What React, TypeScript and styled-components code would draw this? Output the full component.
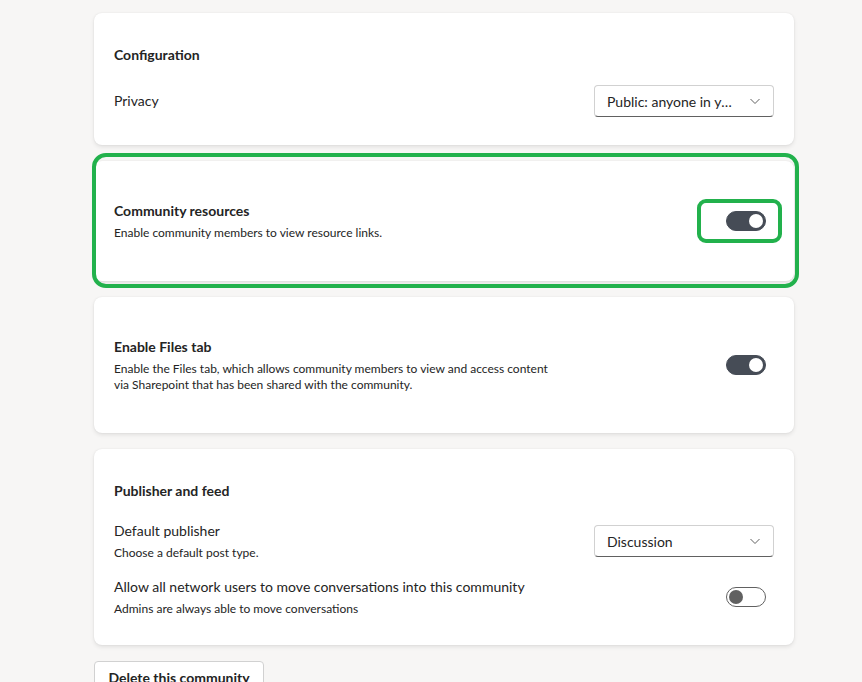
import React from 'react';
import styled, { createGlobalStyle } from 'styled-components';

const GlobalStyle = createGlobalStyle`
    html, body {
        margin: 0;
        padding: 0;
        background: #f7f6f5;
        overflow: hidden;
    }
    body {
        font-family: Lato, "Segoe UI", "Noto Sans", sans-serif;
        color: #242424;
    }
`

const Page = styled.div`
    width: 700px;
    padding: 13px 0 0 94px;
    display: flex;
    flex-direction: column;
    gap: 16px;
`
const Card = styled.section<{ $toggle?: boolean }>`
    position: relative;
    background: #ffffff;
    border-radius: 8px;
    box-shadow: 0 2px 4px rgba(0, 0, 0, 0.09), 0 0 2px rgba(0, 0, 0, 0.07);
    padding: ${p => p.$toggle ? '40px 28px 40px 20px' : '32px 20px 28px 20px'};
    display: flex;
    flex-direction: column;
    gap: 20px;
`
const ToggleRow = styled.div`
    display: flex;
    align-items: center;
    justify-content: space-between;
`
const Text = styled.div<{ $width?: number }>`
    display: flex;
    flex-direction: column;
    gap: 4px;
    max-width: ${p => p.$width ? p.$width + 'px' : 'none'};
`
const Title = styled.h3`
    margin: 0;
    font-size: 14px;
    line-height: 20px;
    font-weight: 700;
`
const Label = styled.div`
    font-size: 14px;
    line-height: 20px;
`
const Hint = styled.p`
    margin: 0;
    font-size: 12px;
    line-height: 16px;
`
const Rows = styled.div`
    display: flex;
    flex-direction: column;
    gap: 16px;
`
const Row = styled.div`
    display: flex;
    align-items: center;
    justify-content: space-between;
    min-height: 32px;
`
const Select = styled.button`
    box-sizing: border-box;
    width: 180px;
    height: 32px;
    padding: 0 12px 0 12px;
    background: #ffffff;
    border: 1px solid #d1d1d1;
    border-bottom-color: #616161;
    border-radius: 4px;
    display: flex;
    align-items: center;
    justify-content: space-between;
    font-family: inherit;
    font-size: 14px;
    color: #242424;
    cursor: pointer;
`
const SelectValue = styled.span`
    max-width: 128px;
    white-space: nowrap;
    overflow: hidden;
    text-overflow: ellipsis;
`
const Switch = styled.span<{ $on?: boolean; $gap?: number }>`
    position: relative;
    flex-shrink: 0;
    box-sizing: border-box;
    width: 40px;
    height: 20px;
    margin-right: ${p => p.$gap || 0}px;
    border-radius: 10px;
    background: ${p => p.$on ? '#464c56' : '#ffffff'};
    border: 1px solid ${p => p.$on ? '#464c56' : '#616161'};

    &::after {
        content: "";
        position: absolute;
        top: 2px;
        left: ${p => p.$on ? '22px' : '2px'};
        width: 14px;
        height: 14px;
        border-radius: 50%;
        background: ${p => p.$on ? '#ffffff' : '#616161'};
    }
`
const SwitchWrap = styled.span`
    position: relative;
    display: inline-flex;
`
// green marker drawn over the screenshot
const Highlight = styled.span<{ $inset: string; $radius: number }>`
    position: absolute;
    inset: ${p => p.$inset};
    border: 4px solid #22b14c;
    border-radius: ${p => p.$radius}px;
    pointer-events: none;
`
const DeleteButton = styled.button`
    align-self: flex-start;
    box-sizing: border-box;
    width: 170px;
    height: 32px;
    background: #ffffff;
    border: 1px solid #d1d1d1;
    border-radius: 4px;
    font-family: inherit;
    font-size: 14px;
    font-weight: 700;
    color: #242424;
    cursor: pointer;
`

const Chevron = () => (
    <svg width="12" height="12" viewBox="0 0 12 12" fill="none">
        <path d="M1.5 4 L6 8.5 L10.5 4" stroke="#616161" strokeWidth="1" />
    </svg>
);

function App() {
    return (
        <>
            <GlobalStyle />
            <Page>
                <Card>
                    <Title>Configuration</Title>
                    <Row>
                        <Label>Privacy</Label>
                        <Select>
                            <SelectValue>Public: anyone in your network</SelectValue>
                            <Chevron />
                        </Select>
                    </Row>
                </Card>

                <Card $toggle>
                    <Highlight $inset="-8px -5px -7px -2px" $radius={14} />
                    <ToggleRow>
                        <Text>
                            <Title>Community resources</Title>
                            <Hint>Enable community members to view resource links.</Hint>
                        </Text>
                        <SwitchWrap>
                            <Switch $on />
                            <Highlight $inset="-12px -16px -12px -29px" $radius={9} />
                        </SwitchWrap>
                    </ToggleRow>
                </Card>

                <Card $toggle>
                    <ToggleRow>
                        <Text $width={445}>
                            <Title>Enable Files tab</Title>
                            <Hint>Enable the Files tab, which allows community members to view and access content via Sharepoint that has been shared with the community.</Hint>
                        </Text>
                        <Switch $on />
                    </ToggleRow>
                </Card>

                <Card>
                    <Title>Publisher and feed</Title>
                    <Rows>
                        <Row>
                            <Text>
                                <Label>Default publisher</Label>
                                <Hint>Choose a default post type.</Hint>
                            </Text>
                            <Select>
                                <SelectValue>Discussion</SelectValue>
                                <Chevron />
                            </Select>
                        </Row>
                        <Row>
                            <Text>
                                <Label>Allow all network users to move conversations into this community</Label>
                                <Hint>Admins are always able to move conversations</Hint>
                            </Text>
                            <Switch $gap={8} />
                        </Row>
                    </Rows>
                </Card>

                <DeleteButton>Delete this community</DeleteButton>
            </Page>
        </>
    );
}

export default App;
